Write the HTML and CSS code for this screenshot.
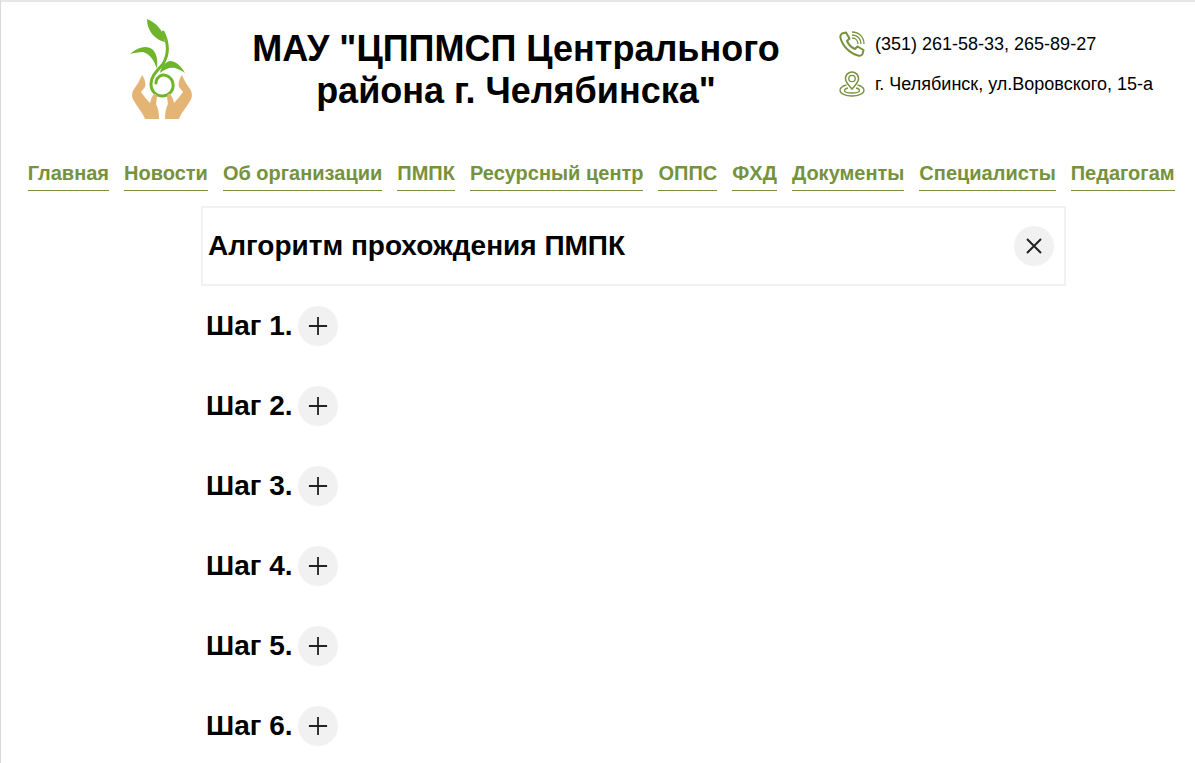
FILE: index.html
```html
<!DOCTYPE html>
<html lang="ru">

<head>
    <meta charset="UTF-8">
    <meta name="viewport" content="width=device-width, initial-scale=1.0">
    <title>Алгоритм прохождения ПМПК</title>
    <link rel="stylesheet" href="styles.css">
</head>

<body>
    <header class="top">
        <svg class="logo" viewBox="128 18 66 106" aria-hidden="true">
            <!-- sprout -->
            <path d="M147 19C156 23 163 29 165 42C156 40 147 32 147 19Z" fill="#6fb52c" />
            <path d="M163 32C169 44 169 54 163 64C157 71 151 76 151 84C151 92 157 96 162 96C169 96 174 90 173 84C172 77 165 73 160 76C157 78 156 80 156 83" fill="none" stroke="#6fb52c" stroke-width="3" stroke-linecap="round" />
            <path d="M130 54C138 47 146 45 152 49C157 53 158 61 157 69C154 60 150 54 143 52C138 52 134 53 130 54Z" fill="#6fb52c" />
            <path d="M185 73C181 66 176 61 170 61C165 62 161 67 160 73C165 69 170 67 175 68C179 69 182 71 185 73Z" fill="#6fb52c" />
            <!-- hands -->
            <path d="M142 75C145 79 146 84 145 87L141 92C144 96 147 100 150 103C151 99 152 96 154 94C156 93 157 95 157 97L156 104C158 108 159 112 159 119H145C143 113 138 108 134 101C131 97 132 92 134 89C137 85 140 80 142 75Z" fill="#e4b474" />
            <path d="M182 75C179 79 178 84 179 87L183 92C180 96 177 100 174 103C173 99 172 96 170 94C168 93 167 95 167 97L168 104C166 108 165 112 165 119H179C181 113 186 108 190 101C193 97 192 92 190 89C187 85 184 80 182 75Z" fill="#e4b474" />
        </svg>

        <h1 class="site-name">МАУ "ЦППМСП Центрального района г. Челябинска"</h1>

        <div class="contacts">
            <div class="contact">
                <svg class="contact-icon" viewBox="0 0 26 26" aria-hidden="true">
                    <path d="M3 2.500L7 1.500L10.500 7.500L8 10C9.500 13.500 12.500 16.500 16 18L18.500 15.500L24.500 19L23.500 23C23 24.500 21 25 19 24.500C11 22.500 3.500 15 1.500 7C1 5 1.500 3.500 3 2.500Z" fill="none" stroke="#76923c" stroke-width="2" stroke-linejoin="round" />
                    <path d="M13 7C16.500 7 19 9.500 19 13M13 4C18.500 4 22 7.500 22 13M13 1C20 1 25 6 25 13" fill="none" stroke="#76923c" stroke-width="1.300" />
                </svg>
                <span>(351) 261-58-33, 265-89-27</span>
            </div>
            <div class="contact">
                <svg class="contact-icon" viewBox="0 0 26 26" aria-hidden="true">
                    <path d="M13 18C10 14.500 6.500 11.500 6.500 7.500C6.500 3.800 9.500 1 13 1C16.500 1 19.500 3.800 19.500 7.500C19.500 11.500 16 14.500 13 18Z" fill="none" stroke="#76923c" stroke-width="1.500" />
                    <circle cx="13" cy="7.500" r="3.200" fill="none" stroke="#76923c" stroke-width="1.300" />
                    <path d="M7.500 14C3.500 15 1 17 1 19.500C1 22.500 6.500 25 13 25C19.500 25 25 22.500 25 19.500C25 17 22.500 15 18.500 14M9 17C7 17.500 5.500 18.500 5.500 19.500C5.500 21 9 22 13 22C17 22 20.500 21 20.500 19.500C20.500 18.500 19 17.500 17 17" fill="none" stroke="#76923c" stroke-width="1.300" />
                </svg>
                <span>г. Челябинск, ул.Воровского, 15-а</span>
            </div>
        </div>
    </header>

    <nav class="menu">
        <a href="#">Главная</a>
        <a href="#">Новости</a>
        <a href="#">Об организации</a>
        <a href="#">ПМПК</a>
        <a href="#">Ресурсный центр</a>
        <a href="#">ОППС</a>
        <a href="#">ФХД</a>
        <a href="#">Документы</a>
        <a href="#">Специалисты</a>
        <a href="#">Педагогам</a>
    </nav>

    <main class="content">
        <section class="panel">
            <h2>Алгоритм прохождения ПМПК</h2>
            <button class="round-btn" type="button" aria-label="Закрыть">
                <svg viewBox="0 0 20 20"><path d="M3 3L17 17M17 3L3 17" /></svg>
            </button>
        </section>

        <div class="step"><h3>Шаг 1.</h3><button class="round-btn" type="button" aria-label="Открыть"><svg viewBox="0 0 22 22"><path d="M11 1V21M1 11H21" /></svg></button></div>
        <div class="step"><h3>Шаг 2.</h3><button class="round-btn" type="button" aria-label="Открыть"><svg viewBox="0 0 22 22"><path d="M11 1V21M1 11H21" /></svg></button></div>
        <div class="step"><h3>Шаг 3.</h3><button class="round-btn" type="button" aria-label="Открыть"><svg viewBox="0 0 22 22"><path d="M11 1V21M1 11H21" /></svg></button></div>
        <div class="step"><h3>Шаг 4.</h3><button class="round-btn" type="button" aria-label="Открыть"><svg viewBox="0 0 22 22"><path d="M11 1V21M1 11H21" /></svg></button></div>
        <div class="step"><h3>Шаг 5.</h3><button class="round-btn" type="button" aria-label="Открыть"><svg viewBox="0 0 22 22"><path d="M11 1V21M1 11H21" /></svg></button></div>
        <div class="step"><h3>Шаг 6.</h3><button class="round-btn" type="button" aria-label="Открыть"><svg viewBox="0 0 22 22"><path d="M11 1V21M1 11H21" /></svg></button></div>
    </main>
</body>

</html>
```

FILE: styles.css
```css
* {
    box-sizing: border-box;
}

html {
    overflow: hidden;
}

body {
    margin: 0;
    height: 763px;
    overflow: hidden;
    border-top: 2px solid #e6e6e6;
    border-left: 1px solid #d8d8d8;
    font-family: "Liberation Sans", Arial, sans-serif;
    color: #000;
    background: #fff;
}

.top {
    display: flex;
    align-items: flex-start;
    height: 159px;
    padding-left: 127px;
}

.logo {
    width: 66px;
    height: 106px;
    margin-top: 16px;
    flex-shrink: 0;
}

.site-name {
    width: 560px;
    margin: 26px 0 0 42px;
    font-size: 36px;
    line-height: 42px;
    font-weight: bold;
    text-align: center;
}

.contacts {
    display: flex;
    flex-direction: column;
    gap: 14px;
    margin: 29px 0 0 43px;
}

.contact {
    display: flex;
    align-items: center;
    gap: 10px;
    font-size: 18px;
}

.contact-icon {
    width: 26px;
    height: 26px;
}

.menu {
    display: flex;
    gap: 15px;
    padding-left: 26.7px;
}

.menu a {
    padding-bottom: 5px;
    border-bottom: 1px solid #76923c;
    color: #76923c;
    font-size: 20px;
    font-weight: bold;
    line-height: 24px;
    text-decoration: none;
    white-space: nowrap;
}

.content {
    width: 865px;
    margin: 15px 0 0 200px;
}

.panel {
    display: flex;
    align-items: center;
    justify-content: space-between;
    height: 80px;
    padding: 0 10px 0 5px;
    border: 2px solid #f1f1f1;
}

.panel h2 {
    margin: 0;
    font-size: 28px;
}

.step {
    display: flex;
    align-items: center;
    gap: 5px;
    height: 80px;
    padding-left: 5px;
}

.step h3 {
    margin: 0;
    font-size: 28px;
}

.round-btn {
    display: flex;
    align-items: center;
    justify-content: center;
    width: 40px;
    height: 40px;
    padding: 0;
    border: none;
    border-radius: 50%;
    background: #f1f1f1;
}

.round-btn svg {
    width: 20px;
    height: 20px;
}

.round-btn path {
    fill: none;
    stroke: #222;
    stroke-width: 2;
}
```
